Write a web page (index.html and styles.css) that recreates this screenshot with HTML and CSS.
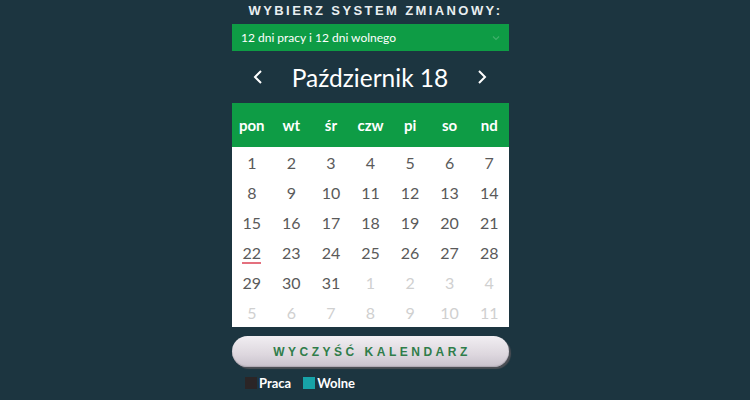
FILE: index.html
```html
<!DOCTYPE html>
<html lang="pl">
<head>
<meta charset="utf-8">
<link rel="stylesheet" href="styles.css">
</head>
<body>
<div class="wrap">
  <div class="title">WYBIERZ SYSTEM ZMIANOWY:</div>
  <div class="select">
    <span>12 dni pracy i 12 dni wolnego</span>
    <svg class="caret" width="8" height="6" viewBox="0 0 8 6"><path d="M1 1.5 L4 4.5 L7 1.5" fill="none" stroke="#3fb06a" stroke-width="1.2"/></svg>
  </div>
  <div class="month">
    <svg class="arr" width="10" height="16" viewBox="0 0 10 16"><path d="M8 2 L2 8 L8 14" fill="none" stroke="#fff" stroke-width="2"/></svg>
    <span class="mname">Październik 18</span>
    <svg class="arr" width="10" height="16" viewBox="0 0 10 16"><path d="M2 2 L8 8 L2 14" fill="none" stroke="#fff" stroke-width="2"/></svg>
  </div>
  <div class="cal">
    <div class="head">
      <span>pon</span><span>wt</span><span>śr</span><span>czw</span><span>pi</span><span>so</span><span>nd</span>
    </div>
    <div class="grid">
      <span>1</span><span>2</span><span>3</span><span>4</span><span>5</span><span>6</span><span>7</span>
      <span>8</span><span>9</span><span>10</span><span>11</span><span>12</span><span>13</span><span>14</span>
      <span>15</span><span>16</span><span>17</span><span>18</span><span>19</span><span>20</span><span>21</span>
      <span class="today">22</span><span>23</span><span>24</span><span>25</span><span>26</span><span>27</span><span>28</span>
      <span>29</span><span>30</span><span>31</span><span class="off">1</span><span class="off">2</span><span class="off">3</span><span class="off">4</span>
      <span class="off">5</span><span class="off">6</span><span class="off">7</span><span class="off">8</span><span class="off">9</span><span class="off">10</span><span class="off">11</span>
    </div>
  </div>
  <div class="btn">WYCZYŚĆ KALENDARZ</div>
  <div class="legend">
    <span class="sq work"></span><span class="lbl">Praca</span>
    <span class="sq free"></span><span class="lbl">Wolne</span>
  </div>
</div>
</body>
</html>
```
FILE: styles.css
```css
html, body {
  margin: 0;
  padding: 0;
  background: #1c3540;
  height: 400px;
  overflow: hidden;
}
.wrap {
  width: 277px;
  margin-left: calc(50% - 143px);
  display: flex;
  flex-direction: column;
  font-family: Lato, "Liberation Sans", sans-serif;
}
.title {
  font-family: "Liberation Sans", Arial, sans-serif;
  font-weight: bold;
  font-size: 13px;
  letter-spacing: 2.4px;
  color: #e9eef0;
  text-align: center;
  height: 24px;
  line-height: 22px;
  white-space: nowrap;
  margin-left: -16px;
  margin-right: -26px;
}
.select {
  height: 27px;
  background: #0e9c45;
  color: #fff;
  font-size: 12px;
  display: flex;
  align-items: center;
  justify-content: space-between;
  padding: 0 9px 0 9px;
}
.month {
  height: 52px;
  display: flex;
  align-items: center;
  justify-content: space-between;
  padding: 0 22px 0 21px;
  color: #fff;
}
.mname {
  font-size: 24.5px;
  line-height: 1;
  padding-top: 2px;
}
.cal {
  background: #fff;
}
.head {
  height: 44px;
  background: #0e9c45;
  display: grid;
  grid-template-columns: repeat(7, 1fr);
  align-items: center;
  color: #fff;
  font-weight: bold;
  font-size: 15px;
  text-align: center;
}
.grid {
  display: grid;
  grid-template-columns: repeat(7, 1fr);
  grid-auto-rows: 30px;
  text-align: center;
  font-size: 16px;
  color: #5a5a5a;
}
.grid span {
  display: flex;
  align-items: center;
  justify-content: center;
}
.grid .off {
  color: #d0d0d0;
}
.grid .today {
  position: relative;
}
.grid .today::after {
  content: "";
  position: absolute;
  left: 10px;
  width: 19px;
  bottom: 3px;
  height: 2px;
  background: #e4707e;
}
.btn {
  margin-top: 9px;
  height: 31px;
  border-radius: 16px;
  background: linear-gradient(#f1eef2, #ddd7de 60%, #c9c2cc);
  box-shadow: 2px 2px 1px #4c4f55, inset 0 -1px 1px #b0a9b3;
  color: #2f7d4a;
  font-family: "Liberation Sans", Arial, sans-serif;
  font-weight: bold;
  font-size: 12px;
  letter-spacing: 3.5px;
  padding-left: 3px;
  display: flex;
  align-items: center;
  justify-content: center;
}
.legend {
  margin-top: 9px;
  padding-left: 13px;
  display: flex;
  align-items: center;
  height: 14px;
  color: #fff;
  font-size: 13px;
  font-weight: bold;
}
.sq {
  width: 12px;
  height: 12px;
  display: inline-block;
  margin-right: 2px;
}
.work { background: #2b2526; }
.free { background: #17a3a8; }
.lbl { margin-right: 12px; }
```
